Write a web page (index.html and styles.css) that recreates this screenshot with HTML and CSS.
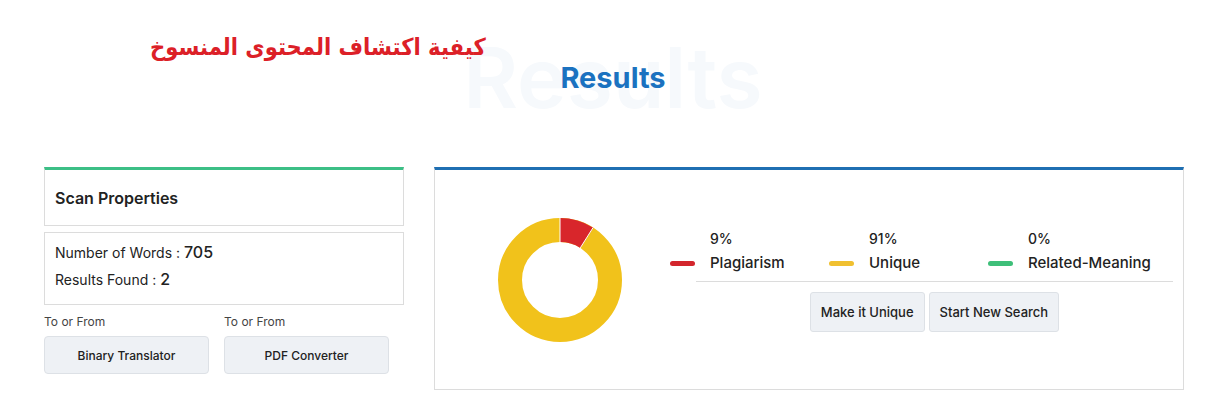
FILE: index.html
```html
<!DOCTYPE html>
<html lang="en">
<head>
    <meta charset="UTF-8">
    <meta name="viewport" content="width=device-width, initial-scale=1.0">
    <title>Results</title>
    <link rel="stylesheet" href="styles.css">
</head>
<body>
    <div class="page">
        <div class="heading">
            <div class="results-title">
                <span class="watermark">Results</span>
                <h1>Results</h1>
            </div>
            <h2 class="arabic-title" dir="rtl">كيفية اكتشاف المحتوى المنسوخ</h2>
        </div>

        <div class="content">
            <div class="side">
                <div class="box box-head">
                    <h3>Scan Properties</h3>
                </div>
                <div class="box box-body">
                    <p>Number of Words : <span class="num">705</span></p>
                    <p>Results Found : <span class="num">2</span></p>
                </div>
                <div class="tools">
                    <div class="tool">
                        <span class="tool-label">To or From</span>
                        <button class="tool-btn">Binary Translator</button>
                    </div>
                    <div class="tool">
                        <span class="tool-label">To or From</span>
                        <button class="tool-btn">PDF Converter</button>
                    </div>
                </div>
            </div>

            <div class="panel">
                <div class="donut">
                    <svg width="124" height="124" viewBox="0 0 124 124">
                        <g transform="rotate(-90 62 62)">
                            <circle cx="62" cy="62" r="50" fill="none" stroke="#f1c21b" stroke-width="24"></circle>
                            <circle cx="62" cy="62" r="50" fill="none" stroke="#d8262b" stroke-width="24"
                                    stroke-dasharray="28.3 286"></circle>
                        </g>
                        <line x1="62" y1="0" x2="62" y2="24" stroke="#fff" stroke-width="1"></line>
                        <line x1="62" y1="62" x2="95.2" y2="9.4" stroke="#fff" stroke-width="1" stroke-dasharray="0 38 24"></line>
                    </svg>
                </div>
                <div class="summary">
                    <div class="legend">
                        <div class="legend-item">
                            <span class="dash red"></span>
                            <div class="legend-text">
                                <span class="pct">9%</span>
                                <span class="name">Plagiarism</span>
                            </div>
                        </div>
                        <div class="legend-item">
                            <span class="dash yellow"></span>
                            <div class="legend-text">
                                <span class="pct">91%</span>
                                <span class="name">Unique</span>
                            </div>
                        </div>
                        <div class="legend-item">
                            <span class="dash green"></span>
                            <div class="legend-text">
                                <span class="pct">0%</span>
                                <span class="name">Related-Meaning</span>
                            </div>
                        </div>
                    </div>
                    <div class="actions">
                        <button class="action-btn">Make it Unique</button>
                        <button class="action-btn">Start New Search</button>
                    </div>
                </div>
            </div>
        </div>
    </div>
</body>
</html>
```

FILE: styles.css
```css
body {
    margin: 0;
    padding: 0;
    background-color: #fff;
    font-family: 'Inter', 'Open Sans', sans-serif;
    color: #222;
}

.page {
    width: 1216px;
    height: 413px;
    overflow: hidden;
}

.heading {
    position: relative;
    height: 167px;
}

.arabic-title {
    position: absolute;
    left: 150px;
    top: 33px;
    margin: 0;
    font-family: 'DejaVu Sans Condensed', 'DejaVu Sans', sans-serif;
    font-size: 23.5px;
    font-weight: bold;
    color: #dc2027;
}

.results-title {
    position: absolute;
    left: 0;
    right: 0;
    top: 36px;
    text-align: center;
}

.results-title h1 {
    position: relative;
    margin: 0;
    padding-left: 10px;
    font-size: 29px;
    font-weight: 700;
    color: #1b72c0;
    line-height: 84px;
}

.watermark {
    position: absolute;
    left: 0;
    right: 0;
    top: 0;
    padding-left: 10px;
    font-size: 84px;
    font-weight: 600;
    line-height: 84px;
    color: #f6f9fc;
}

.content {
    display: flex;
    gap: 30px;
    padding-left: 44px;
}

.side {
    width: 360px;
    display: flex;
    flex-direction: column;
}

.box {
    border: 1px solid #dcdcdc;
    padding: 0 10px;
}

.box-head {
    border-top: 3px solid #3cbf86;
    height: 55px;
    display: flex;
    align-items: center;
}

.box-head h3 {
    margin: 0;
    font-size: 16px;
    font-weight: 600;
    color: #222;
}

.box-body {
    margin-top: 6px;
    height: 73px;
    padding-top: 6px;
    box-sizing: border-box;
}

.box-body p {
    margin: 0;
    font-size: 14px;
    line-height: 27px;
    color: #222;
}

.box-body .num {
    font-size: 16px;
    font-weight: 500;
}

.tools {
    display: flex;
    gap: 15px;
    margin-top: 9px;
}

.tool {
    display: flex;
    flex-direction: column;
}

.tool-label {
    font-size: 12px;
    color: #444;
    line-height: 15px;
    margin-bottom: 7px;
}

.tool-btn {
    width: 165px;
    height: 38px;
    background-color: #eef1f5;
    border: 1px solid #dde1e6;
    border-radius: 4px;
    font-family: inherit;
    font-size: 12px;
    font-weight: 500;
    color: #222;
}

.panel {
    width: 750px;
    height: 223px;
    box-sizing: border-box;
    border: 1px solid #dcdcdc;
    border-top: 3px solid #1f6fb2;
    display: flex;
    align-items: center;
}

.donut {
    margin-left: 63px;
    width: 124px;
    height: 124px;
}

.donut svg {
    display: block;
}

.summary {
    margin-left: 48px;
    width: 503px;
    display: flex;
    flex-direction: column;
}

.legend {
    display: flex;
    border-bottom: 1px solid #dcdcdc;
    margin-left: 26px;
    padding-bottom: 7px;
}

.legend-item {
    width: 159px;
    display: flex;
    align-items: flex-end;
    margin-left: -26px;
    white-space: nowrap;
}

.legend-item + .legend-item {
    margin-left: 0;
}

.dash {
    width: 25px;
    height: 5px;
    border-radius: 3px;
    margin-right: 15px;
    margin-bottom: 8px;
    flex-shrink: 0;
}

.dash.red { background-color: #d3262d; }
.dash.yellow { background-color: #f0c030; }
.dash.green { background-color: #3ebf79; }

.legend-text {
    display: flex;
    flex-direction: column;
}

.pct {
    font-size: 14px;
    font-weight: 500;
    line-height: 22px;
    margin-bottom: 2px;
}

.name {
    font-size: 15px;
    font-weight: 500;
    line-height: 22px;
}

.actions {
    display: flex;
    justify-content: center;
    gap: 4px;
    margin-top: 10px;
    margin-left: 26px;
}

.action-btn {
    height: 40px;
    padding: 0 10px;
    background-color: #eef1f5;
    border: 1px solid #dde1e6;
    border-radius: 3px;
    font-family: inherit;
    font-size: 13px;
    font-weight: 500;
    color: #222;
}
```
